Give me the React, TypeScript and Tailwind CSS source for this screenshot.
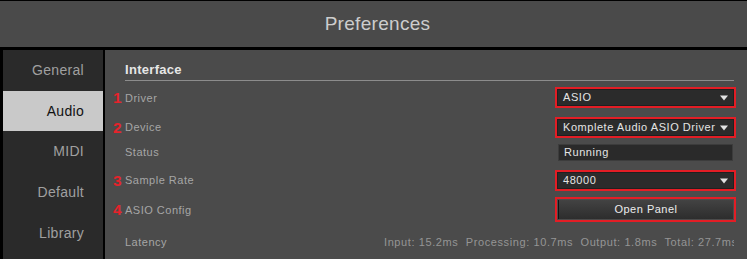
import React from "react";

const font = { fontFamily: '"Liberation Sans", Arial, sans-serif' };

function Tri() {
  return (
    <svg width="8" height="6" viewBox="0 0 8 6" className="shrink-0">
      <path d="M0 0.5 L8 0.5 L4 5.5 Z" fill="#e2e2e2" />
    </svg>
  );
}

function Num({ n }: { n?: string }) {
  return (
    <div className="w-[12px] shrink-0 text-[15.5px] font-bold leading-none text-[#e5232b]">
      {n ?? ""}
    </div>
  );
}

function Label({ children }: { children: React.ReactNode }) {
  return (
    <div className="text-[11px] tracking-[0.5px] text-[#a6a6a6] leading-none">{children}</div>
  );
}

function Dropdown({ text }: { text: string }) {
  return (
    <div className="ml-auto w-[181px] shrink-0 h-full border-2 border-[#e31d25]">
      <div className="h-full border border-[#202020] bg-[#2b2b2b] flex items-center pl-[5px] pr-[5px]">
        <span className="flex-1 text-[11px] tracking-[0.55px] text-[#e4e4e4] whitespace-nowrap leading-none">
          {text}
        </span>
        <Tri />
      </div>
    </div>
  );
}

const sidebar = ["General", "Audio", "MIDI", "Default", "Library"];

export default function App() {
  return (
    <div className="w-[747px] h-[259px] bg-black overflow-hidden flex flex-col pt-px" style={font}>
      <div className="h-[46px] shrink-0 bg-[#4a4a4a] flex items-center justify-center pl-[8px]">
        <span className="text-[19px] tracking-[0.3px] text-[#cdcdcd]">Preferences</span>
      </div>
      <div className="mt-[3px] flex flex-1 pl-[3px] gap-[2px] min-h-0">
        <div className="w-[100px] shrink-0 bg-[#2a2a2a] flex flex-col">
          {sidebar.map((s) => (
            <div
              key={s}
              className={
                s === "Audio"
                  ? "h-[40px] flex items-center justify-end pr-[19px] bg-[#c9c9c9] text-[14px] tracking-[0.3px] text-[#111111]"
                  : "h-[41px] flex items-center justify-end pr-[19px] text-[14px] tracking-[0.3px] text-[#a0a0a0]"
              }
            >
              {s}
            </div>
          ))}
        </div>
        <div className="flex-1 min-w-0 overflow-hidden bg-[#4b4b4b] pl-[8px] pr-[11px] flex flex-col">
          <div className="ml-[12px] mr-[2px] pt-[12px] pb-[2px] border-b border-[#8c8c8c] leading-[16px] text-[13px] font-bold tracking-[0.3px] text-[#e6e6e6]">
            Interface
          </div>
          <div className="mt-[6px] h-[21px] flex items-center">
            <Num n="1" />
            <div className="pt-[2px]">
              <Label>Driver</Label>
            </div>
            <Dropdown text="ASIO" />
          </div>
          <div className="mt-[9px] h-[21px] flex items-center">
            <Num n="2" />
            <Label>Device</Label>
            <Dropdown text="Komplete Audio ASIO Driver" />
          </div>
          <div className="mt-[4px] h-[21px] flex items-center">
            <Num />
            <Label>Status</Label>
            <div className="ml-auto w-[181px] shrink-0 h-full px-[3px] py-[2px]">
              <div className="h-full border border-[#3c3c3c] bg-[#2a2a2a] flex items-center pl-[5px] text-[11px] tracking-[0.55px] text-[#e4e4e4] leading-none">
                Running
              </div>
            </div>
          </div>
          <div className="mt-[7px] h-[21px] flex items-center">
            <Num n="3" />
            <Label>Sample Rate</Label>
            <Dropdown text="48000" />
          </div>
          <div className="mt-[6px] h-[25px] flex items-center">
            <Num n="4" />
            <div className="pt-[2px]">
              <Label>ASIO Config</Label>
            </div>
            <div className="ml-auto w-[181px] shrink-0 h-full border-2 border-[#e31d25] bg-[#4b4b4b] p-px">
              <div className="h-full border-l border-[#111111] bg-gradient-to-b from-[#434343] to-[#2d2d2d] flex items-center justify-center text-[11px] tracking-[0.5px] text-[#ececec] leading-none">
                Open Panel
              </div>
            </div>
          </div>
          <div className="mt-[12px] h-[16px] flex items-center min-w-0">
            <Num />
            <div className="w-[259px] shrink-0">
              <Label>Latency</Label>
            </div>
            <div className="flex-1 w-0 min-w-0 mr-[2px] overflow-hidden whitespace-pre text-[11px] tracking-[0.6px] text-[#959595] leading-none">
              {"Input: 15.2ms  Processing: 10.7ms  Output: 1.8ms  Total: 27.7ms"}
            </div>
          </div>
        </div>
      </div>
    </div>
  );
}
